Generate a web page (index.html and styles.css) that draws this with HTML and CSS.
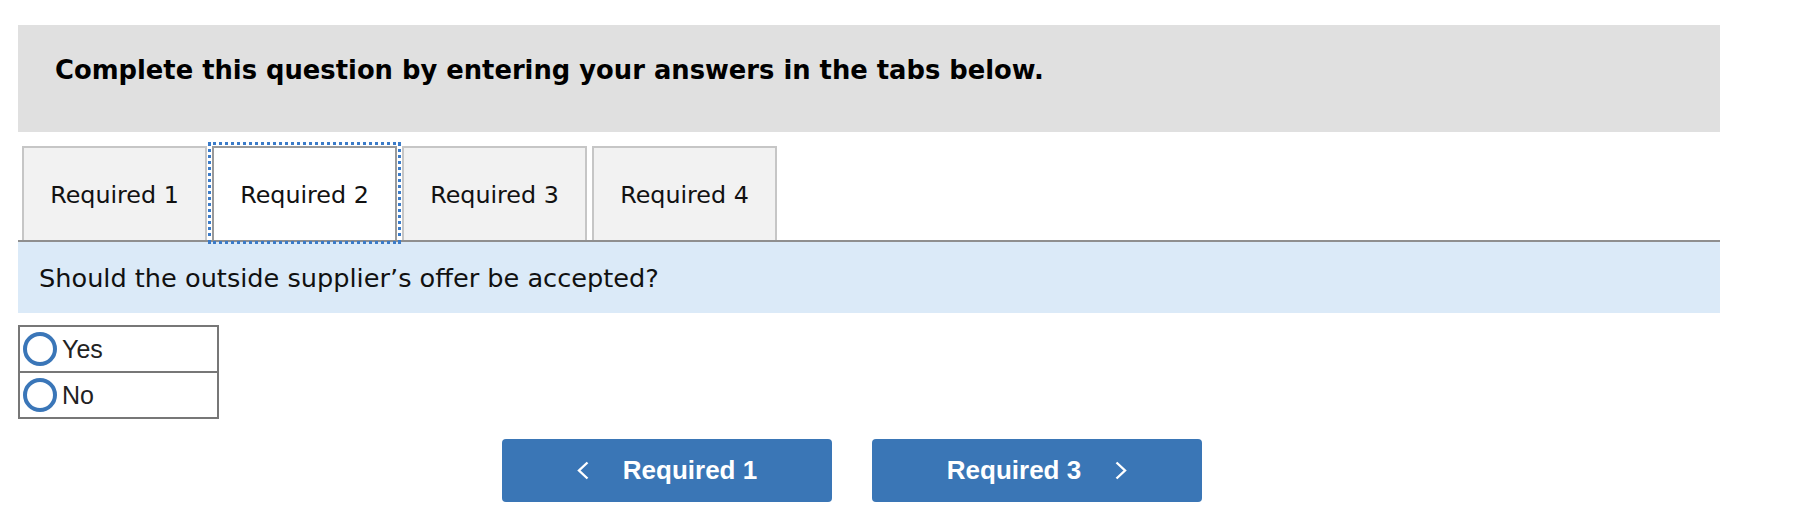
FILE: index.html
```html
<!DOCTYPE html>
<html lang="en">
<head>
<meta charset="utf-8">
<title>Required 2</title>
<link rel="stylesheet" href="styles.css">
</head>
<body>
<div class="page">
  <div class="banner">
    <h1 class="banner-title">Complete this question by entering your answers in the tabs below.</h1>
  </div>
  <div class="tabs">
    <div class="tab">Required 1</div>
    <div class="tab active">Required 2</div>
    <div class="tab">Required 3</div>
    <div class="tab">Required 4</div>
  </div>
  <div class="question">Should the outside supplier’s offer be accepted?</div>
  <div class="choices">
    <div class="choice">
      <svg class="radio" width="34" height="34" viewBox="0 0 34 34"><circle cx="17" cy="17" r="15" fill="none" stroke="#3a76b8" stroke-width="4"/></svg>
      <span>Yes</span>
    </div>
    <div class="choice">
      <svg class="radio" width="34" height="34" viewBox="0 0 34 34"><circle cx="17" cy="17" r="15" fill="none" stroke="#3a76b8" stroke-width="4"/></svg>
      <span>No</span>
    </div>
  </div>
  <div class="nav">
    <button class="nav-btn">
      <svg class="chev" width="12" height="19" viewBox="0 0 12 19"><polyline points="10.5,1.5 2,9.5 10.5,17.5" fill="none" stroke="#fff" stroke-width="2.4"/></svg>
      <span>Required 1</span>
    </button>
    <button class="nav-btn">
      <span>Required 3</span>
      <svg class="chev" width="12" height="19" viewBox="0 0 12 19"><polyline points="1.5,1.5 10,9.5 1.5,17.5" fill="none" stroke="#fff" stroke-width="2.4"/></svg>
    </button>
  </div>
</div>
</body>
</html>
```
FILE: styles.css
```css
html, body {
  margin: 0;
  padding: 0;
  background: #ffffff;
}

body {
  font-family: "DejaVu Sans", Verdana, sans-serif;
  color: #111;
}

.page {
  padding: 25px 0 0 18px;
  width: 1702px;
}

.banner {
  box-sizing: border-box;
  height: 107px;
  background: #e0e0e0;
  padding: 29px 0 0 37px;
}

.banner-title {
  margin: 0;
  font-family: "DejaVu Sans", Verdana, sans-serif;
  font-weight: 700;
  font-size: 25.8px;
  line-height: 32px;
  color: #000;
}

.tabs {
  display: flex;
  align-items: flex-end;
  gap: 5px;
  margin-top: 14px;
  padding-left: 4px;
  border-bottom: 2px solid #8f8f8f;
}

.tab {
  position: relative;
  box-sizing: border-box;
  width: 185px;
  height: 94px;
  border: 2px solid #c6c6c6;
  border-bottom: none;
  background: #f2f2f2;
  display: flex;
  align-items: center;
  justify-content: center;
  padding-top: 2px;
  font-size: 23.8px;
  color: #111;
}

.tab.active {
  background: #ffffff;
  border-color: #9a9a9a;
}

.tab.active::after {
  content: "";
  position: absolute;
  left: -6px;
  right: -6px;
  top: -6px;
  bottom: -4px;
  border: 3px dotted #3b7bc8;
  pointer-events: none;
}

.question {
  box-sizing: border-box;
  height: 71px;
  background: #dbeaf8;
  padding-left: 21px;
  display: flex;
  align-items: center;
  font-size: 25.6px;
  color: #111;
}

.choices {
  margin-top: 12px;
  width: 201px;
  box-sizing: border-box;
  border: 2px solid #777;
}

.choice {
  height: 44px;
  display: flex;
  align-items: center;
  gap: 5px;
  padding-left: 3px;
  font-family: "Liberation Sans", Arial, sans-serif;
  font-size: 25px;
  color: #222;
}

.choice + .choice {
  border-top: 2px solid #777;
}

.radio {
  display: block;
  flex: none;
}

.nav {
  display: flex;
  gap: 40px;
  margin-top: 20px;
  padding-left: 484px;
}

.nav-btn {
  width: 330px;
  height: 63px;
  border: none;
  border-radius: 4px;
  background: #3a76b6;
  color: #ffffff;
  display: flex;
  align-items: center;
  justify-content: center;
  gap: 34px;
  padding: 0;
  font-family: "Liberation Sans", Arial, sans-serif;
  font-weight: 700;
  font-size: 26px;
}

.chev {
  display: block;
  flex: none;
}
```
